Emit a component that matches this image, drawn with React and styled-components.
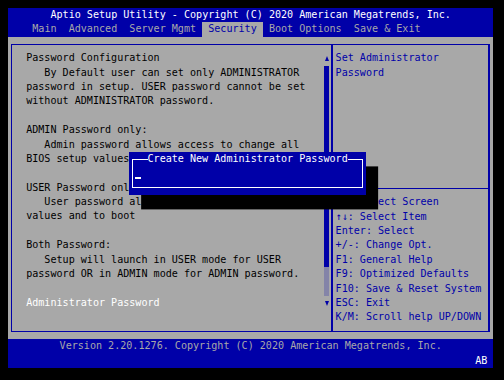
import React from "react";
import styled, { createGlobalStyle } from "styled-components";

const ROW = 14.4;
const BLUE = "#0000a8";
const GRAY = "#a8a8a8";

const GlobalStyle = createGlobalStyle`
  html, body {
    margin: 0;
    padding: 0;
    background: #000;
  }
`;

const Screen = styled.div`
  position: relative;
  margin: 8px;
  width: 80ch;
  background: ${BLUE};
  font-family: "DejaVu Sans Mono", "Liberation Mono", monospace;
  font-size: 10.09px;
  line-height: ${ROW}px;
  white-space: pre;
`;

const TitleBar = styled.div`
  height: ${ROW}px;
  text-align: center;
  color: #ffffff;
`;

const TabBar = styled.div`
  display: flex;
  height: ${ROW}px;
  padding-left: 3ch;
`;

const Tab = styled.div`
  padding: 0 1ch;
  color: ${({ active }) => (active ? BLUE : GRAY)};
  background: ${({ active }) => (active ? GRAY : "transparent")};
`;

const Main = styled.div`
  box-sizing: border-box;
  height: ${ROW * 21}px;
  padding: ${ROW / 2}px 3px;
  background: ${GRAY};
  display: flex;
`;

const Frame = styled.div`
  flex: 1;
  display: grid;
  grid-template-columns: calc(53ch - 1px) 1fr;
  border-style: solid;
  border-color: ${BLUE};
  border-width: 1px 2px 1px 1px;
`;

const LeftPanel = styled.div`
  display: flex;
  border-right: 2px solid ${BLUE};
  padding-top: ${ROW / 2 - 1}px;
`;

const Description = styled.div`
  flex: 1;
  padding-left: calc(2.5ch - 1px);
`;

const Line = styled.div`
  height: ${ROW}px;
  color: ${({ selected }) => (selected ? "#ffffff" : "#000000")};
`;

const Scrollbar = styled.div`
  width: 1ch;
  margin-right: 1px;
  display: flex;
  flex-direction: column;
  align-items: center;
`;

const ArrowCell = styled.div`
  height: ${ROW}px;
  display: flex;
  align-items: center;
  justify-content: center;
`;

const Arrow = styled.div`
  width: 0;
  height: 0;
  border-left: 2.5px solid transparent;
  border-right: 2.5px solid transparent;
  ${({ down }) =>
    down
      ? `border-top: 5px solid ${BLUE};`
      : `border-bottom: 5px solid ${BLUE};`}
`;

const Thumb = styled.div`
  width: 5px;
  height: ${ROW * 14}px;
  background: ${BLUE};
`;

const Track = styled.div`
  width: 5px;
  height: ${ROW * 2}px;
  background-image: radial-gradient(${BLUE} 0.55px, transparent 0.75px);
  background-size: 2px 2px;
`;

const RightPanel = styled.div`
  display: flex;
  flex-direction: column;
  color: ${BLUE};
`;

const HelpText = styled.div`
  box-sizing: border-box;
  height: ${ROW * 10 - 1}px;
  padding: ${ROW / 2 - 1}px 0 0 3px;
`;

const KeyList = styled.div`
  flex: 1;
  border-top: 1px solid ${BLUE};
  padding: ${ROW / 2 - 1}px 0 0 3px;
`;

const Footer = styled.div`
  height: ${ROW * 2}px;
  color: ${GRAY};
`;

const FooterLine = styled.div`
  height: ${ROW}px;
  text-align: ${({ right }) => (right ? "right" : "center")};
  padding-right: ${({ right }) => (right ? "1ch" : "0")};
  color: ${({ right }) => (right ? "#ffffff" : GRAY)};
`;

const Popup = styled.div`
  position: absolute;
  left: 20ch;
  top: ${ROW * 10}px;
  width: 39ch;
  height: ${ROW * 3}px;
  box-sizing: border-box;
  padding: ${ROW / 2}px 3px;
  background: ${BLUE};
  box-shadow: 2ch ${ROW}px 0 #000;
  display: flex;
`;

const PopupFrame = styled.div`
  position: relative;
  flex: 1;
  border: 1px solid #ffffff;
`;

const PopupTitle = styled.div`
  position: absolute;
  top: ${-ROW / 2 - 1}px;
  left: calc(2.5ch - 1px);
  height: ${ROW}px;
  background: ${BLUE};
  color: #ffffff;
`;

const Cursor = styled.div`
  width: 1ch;
  height: 2px;
  margin: ${ROW / 2 - 1 + 11}px 0 0 2px;
  background: #ffffff;
`;

const tabs = ["Main", "Advanced", "Server Mgmt", "Security", "Boot Options", "Save & Exit"];

const description = [
  "Password Configuration",
  "   By Default user can set only ADMINISTRATOR",
  "password in setup. USER password cannot be set",
  "without ADMINISTRATOR password.",
  "",
  "ADMIN Password only:",
  "   Admin password allows access to change all",
  "BIOS setup values.",
  "",
  "USER Password only:",
  "   User password allows access to change user",
  "values and to boot",
  "",
  "Both Password:",
  "   Setup will launch in USER mode for USER",
  "password OR in ADMIN mode for ADMIN password.",
  "",
];

const keys = [
  "\u2192\u2190: Select Screen",
  "\u2191\u2193: Select Item",
  "Enter: Select",
  "+/-: Change Opt.",
  "F1: General Help",
  "F9: Optimized Defaults",
  "F10: Save & Reset System",
  "ESC: Exit",
  "K/M: Scroll help UP/DOWN",
];

export default function App() {
  return (
    <>
      <GlobalStyle />
      <Screen>
        <TitleBar>Aptio Setup Utility - Copyright (C) 2020 American Megatrends, Inc.</TitleBar>
        <TabBar>
          {tabs.map((t) => (
            <Tab key={t} active={t === "Security"}>
              {t}
            </Tab>
          ))}
        </TabBar>
        <Main>
          <Frame>
            <LeftPanel>
              <Description>
                {description.map((l, i) => (
                  <Line key={i}>{l}</Line>
                ))}
                <Line selected>Administrator Password</Line>
              </Description>
              <Scrollbar>
                <ArrowCell>
                  <Arrow />
                </ArrowCell>
                <Thumb />
                <Track />
                <ArrowCell>
                  <Arrow down />
                </ArrowCell>
              </Scrollbar>
            </LeftPanel>
            <RightPanel>
              <HelpText>
                <div>Set Administrator</div>
                <div>Password</div>
              </HelpText>
              <KeyList>
                {keys.map((k) => (
                  <div key={k}>{k}</div>
                ))}
              </KeyList>
            </RightPanel>
          </Frame>
        </Main>
        <Footer>
          <FooterLine>Version 2.20.1276. Copyright (C) 2020 American Megatrends, Inc.</FooterLine>
          <FooterLine right>AB</FooterLine>
        </Footer>
        <Popup>
          <PopupFrame>
            <PopupTitle>Create New Administrator Password</PopupTitle>
            <Cursor />
          </PopupFrame>
        </Popup>
      </Screen>
    </>
  );
}
